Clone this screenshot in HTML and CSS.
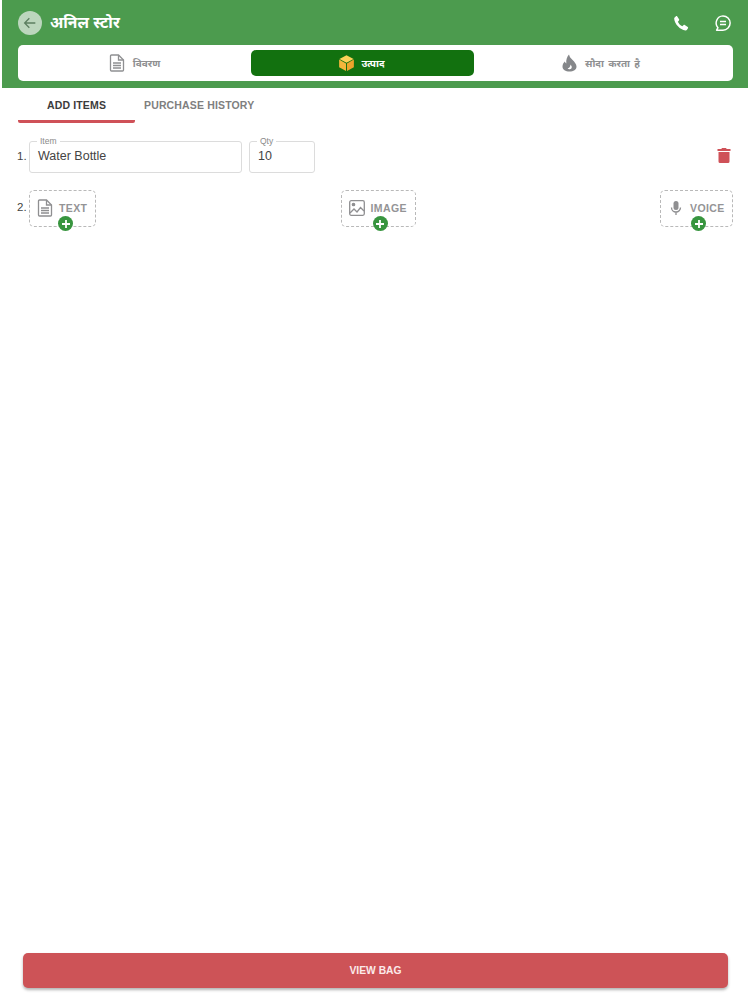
FILE: index.html
```html
<!DOCTYPE html>
<html lang="hi">
<head>
<meta charset="utf-8">
<title>अनिल स्टोर</title>
<link rel="stylesheet" href="styles.css">
</head>
<body>
<div class="app">
  <header class="header">
    <div class="topbar">
      <span class="back">
        <svg width="16" height="16" viewBox="0 0 24 24" fill="none" stroke="#5c7f60" stroke-width="2"><path d="M20 12H5M11 5l-7 7 7 7"/></svg>
      </span>
      <h1 class="title">अनिल स्टोर</h1>
      <span class="top-actions">
        <svg class="icon-phone" width="18" height="18" viewBox="0 0 24 24" fill="#fff"><path d="M6.6 2.8 9.4 7c.3.5.3 1-.1 1.500L7.800 10.200c1 2.400 3.500 5 6 6l1.700-1.500c.5-.4 1-.4 1.500-.1l4 2.700c.6.400.7 1.100.3 1.700l-1.300 2c-.5.7-1.200 1-2 .9C10.800 21 3.500 13.500 2.900 6.300c-.1-.8.200-1.500.9-2l1.900-1.600c.3-.2.700-.1.900.1z"/></svg>
        <svg width="18" height="18" viewBox="0 0 24 24" fill="none" stroke="#fff" stroke-width="2"><path d="M12 2.500a9.500 9.500 0 0 1 0 19H3.500l1.800-3.200A9.500 9.500 0 0 1 12 2.500z" stroke-linejoin="round"/><path d="M8 10h8M8 14h8"/></svg>
      </span>
    </div>
    <nav class="main-tabs">
      <div class="main-tab">
        <svg width="16" height="18" viewBox="0 0 16 18" fill="none" stroke="#8f9092" stroke-width="1.300"><path d="M2.500 1h7L14.500 6v10a1 1 0 0 1-1 1h-11a1 1 0 0 1-1-1V2a1 1 0 0 1 1-1z"/><path d="M9.500 1v5h5M4 9h8M4 11.500h8M4 14h8"/></svg>
        <span>विवरण</span>
      </div>
      <div class="main-tab active">
        <svg width="17" height="18" viewBox="0 0 18 18"><path d="M9 .8 16.500 4.800 9 8.800 1.500 4.800z" fill="#fcd259"/><path d="M1.200 5.400 8.500 9.400v8L1.200 13.400z" fill="#f4b63c"/><path d="M16.800 5.400 9.500 9.400v8l7.300-4z" fill="#eda42c"/></svg>
        <span>उत्पाद</span>
      </div>
      <div class="main-tab main-tab-deals">
        <svg width="15" height="18" viewBox="0 0 15 18"><path d="M7 .5c.6 2.700 2 3.900 3.600 5.500 2 2 3.900 4.200 3.900 6.500 0 3.200-3 5-7 5s-7-1.800-7-5c0-2.200 1.200-3.700 2.300-4.900.4 1 .9 1.500 1.500 1.800C3.900 6 5 2.500 7 .5z" fill="#85878a"/><path d="M8.500 10.500c.6 1 1.300 1.700 1.300 2.700a2.200 2.200 0 0 1-2.300 2c-.8 0-1.500-.4-1.900-1 1.600 0 2.800-1.500 2.900-3.700z" fill="#fff"/></svg>
        <span>सौदा करता है</span>
      </div>
    </nav>
  </header>

  <div class="sub-tabs">
    <div class="sub-tab current">ADD ITEMS</div>
    <div class="sub-tab">PURCHASE HISTORY</div>
  </div>

  <main class="items">
    <div class="row">
      <span class="num">1.</span>
      <fieldset class="field field-item"><legend>Item</legend><span>Water Bottle</span></fieldset>
      <fieldset class="field field-qty"><legend>Qty</legend><span>10</span></fieldset>
      <svg class="trash" width="14" height="15" viewBox="0 0 14 15" fill="#cf5158"><path d="M5 0h4l.7 1H13.500v2H.5V1h3.800zM1.500 4h11v9.500a1.500 1.500 0 0 1-1.500 1.500H3a1.500 1.500 0 0 1-1.500-1.500z"/></svg>
    </div>
    <div class="row row-add">
      <span class="num num-add">2.</span>
      <div class="adders">
        <div class="adder adder-text">
          <svg width="16" height="18" viewBox="0 0 16 18" fill="none" stroke="#8f8f91" stroke-width="1.300"><path d="M2.500 1h7L14.500 6v10a1 1 0 0 1-1 1h-11a1 1 0 0 1-1-1V2a1 1 0 0 1 1-1z"/><path d="M9.500 1v5h5M4 9h8M4 11.500h8M4 14h8"/></svg>
          <span>TEXT</span>
          <span class="plus"><svg width="8" height="8" viewBox="0 0 8 8" stroke="#fff" stroke-width="1.800"><path d="M4 0v8M0 4h8"/></svg></span>
        </div>
        <div class="adder adder-image">
          <svg width="16" height="16" viewBox="0 0 16 16" fill="none" stroke="#8f8f91" stroke-width="1.300"><rect x=".7" y=".7" width="14.600" height="14.600" rx="1.500"/><circle cx="4.500" cy="4.500" r="1.200" fill="#8f8f91"/><path d="m1 13 4-4 3 3 3.500-4.500L15 11"/></svg>
          <span>IMAGE</span>
          <span class="plus"><svg width="8" height="8" viewBox="0 0 8 8" stroke="#fff" stroke-width="1.800"><path d="M4 0v8M0 4h8"/></svg></span>
        </div>
        <div class="adder adder-voice">
          <svg width="16" height="16" viewBox="0 0 16 16" fill="none"><rect x="5.500" y="1" width="5" height="9" rx="2.500" fill="#8f8f91"/><path d="M3.500 7.500a4.500 4.500 0 0 0 9 0M8 12v3" stroke="#8f8f91" stroke-width="1.300"/></svg>
          <span>VOICE</span>
          <span class="plus"><svg width="8" height="8" viewBox="0 0 8 8" stroke="#fff" stroke-width="1.800"><path d="M4 0v8M0 4h8"/></svg></span>
        </div>
      </div>
    </div>
  </main>

  <footer class="footer">
    <div class="view-bag">VIEW BAG</div>
  </footer>
</div>
</body>
</html>
```
FILE: styles.css
```css
* { box-sizing: border-box; }
html, body { margin: 0; padding: 0; background: #fff; }
body { font-family: "Liberation Sans", "Noto Sans", "Noto Sans Devanagari", sans-serif; color: #444; }
.app { width: 750px; height: 1000px; display: flex; flex-direction: column; padding: 0 2px; overflow: hidden; }

.header { background: #4c9b4e; height: 88px; padding: 0 15px 7px 16px; display: flex; flex-direction: column; }
.topbar { height: 45px; display: flex; align-items: center; }
.back { width: 24px; height: 24px; border-radius: 50%; background: #bcd6bd; display: flex; align-items: center; justify-content: center; }
.title { margin: 0 0 0 8px; font-size: 15.600px; line-height: 22px; font-weight: 700; color: #fff; }
.top-actions { margin-left: auto; display: flex; align-items: center; gap: 24px; padding-right: 1px; }

.main-tabs { flex: 1; background: #fff; border-radius: 5px; display: grid; grid-template-columns: 233px 223px 1fr; padding: 5px 0; }
.main-tab { display: flex; align-items: center; justify-content: center; gap: 8px; font-size: 10px; font-weight: 700; word-spacing: 1.500px; color: #8f9092; border-radius: 5px; }
.main-tab.active { background: #12710f; color: #fff; gap: 6px; padding-right: 2px; }
.main-tab-deals { padding-right: 5px; }

.sub-tabs { display: flex; height: 35px; margin-bottom: 1px; padding-left: 16px; }
.sub-tab { font-size: 10.500px; font-weight: 700; letter-spacing: .15px; color: #7f7f7f; line-height: 35px; }
.sub-tab.current { width: 117px; text-align: center; color: #3c3c3c; border-bottom: 3px solid #cf5158; border-radius: 2px; }
.sub-tab + .sub-tab { margin-left: 9px; }

.items { padding: 13px 15px 0 15px; }
.row { display: flex; align-items: flex-start; }
.num { width: 12px; font-size: 11.500px; color: #444; line-height: 16px; margin-top: 11px; }
.field { margin: 0; padding: 0 0 0 8px; height: 36px; border: 1px solid #dcdcdc; border-radius: 3px; font-size: 12.500px; color: #444; line-height: 20px; min-width: 0; }
.field legend { font-size: 8.500px; color: #8a8a8a; padding: 0 3px; margin-left: -1px; line-height: 9px; }
.field span { display: block; margin-top: 0; }
.field-item { width: 213px; }
.field-qty { width: 66px; margin-left: 7px; }
.trash { margin-left: auto; margin-top: 11px; margin-right: 2px; }

.row-add { margin-top: 17px; }
.num-add { margin-top: 9px; }
.adders { flex: 1; display: flex; justify-content: space-between; }
.adder { position: relative; height: 37px; border: 1px dashed #b9b9b9; border-radius: 5px; display: flex; align-items: center; gap: 6px; padding-left: 7px; padding-bottom: 1px; font-size: 10.500px; font-weight: 700; letter-spacing: .4px; color: #949496; }
.adder-text { width: 67px; }
.adder-image { width: 75px; }
.adder-voice { width: 73px; }
.plus { position: absolute; bottom: -5px; width: 15px; height: 15px; border-radius: 50%; background: #38953f; display: flex; align-items: center; justify-content: center; }
.adder-text .plus { left: 28px; }
.adder-image .plus { left: 31px; }
.adder-voice .plus { left: 30px; }

.footer { margin-top: auto; padding: 0 20px 12px 21px; }
.view-bag { height: 35px; background: #cd5357; border-radius: 5px; box-shadow: 0 2px 3px rgba(0,0,0,.3); color: #fbeaea; font-size: 10.300px; font-weight: 700; display: flex; align-items: center; justify-content: center; }
```
